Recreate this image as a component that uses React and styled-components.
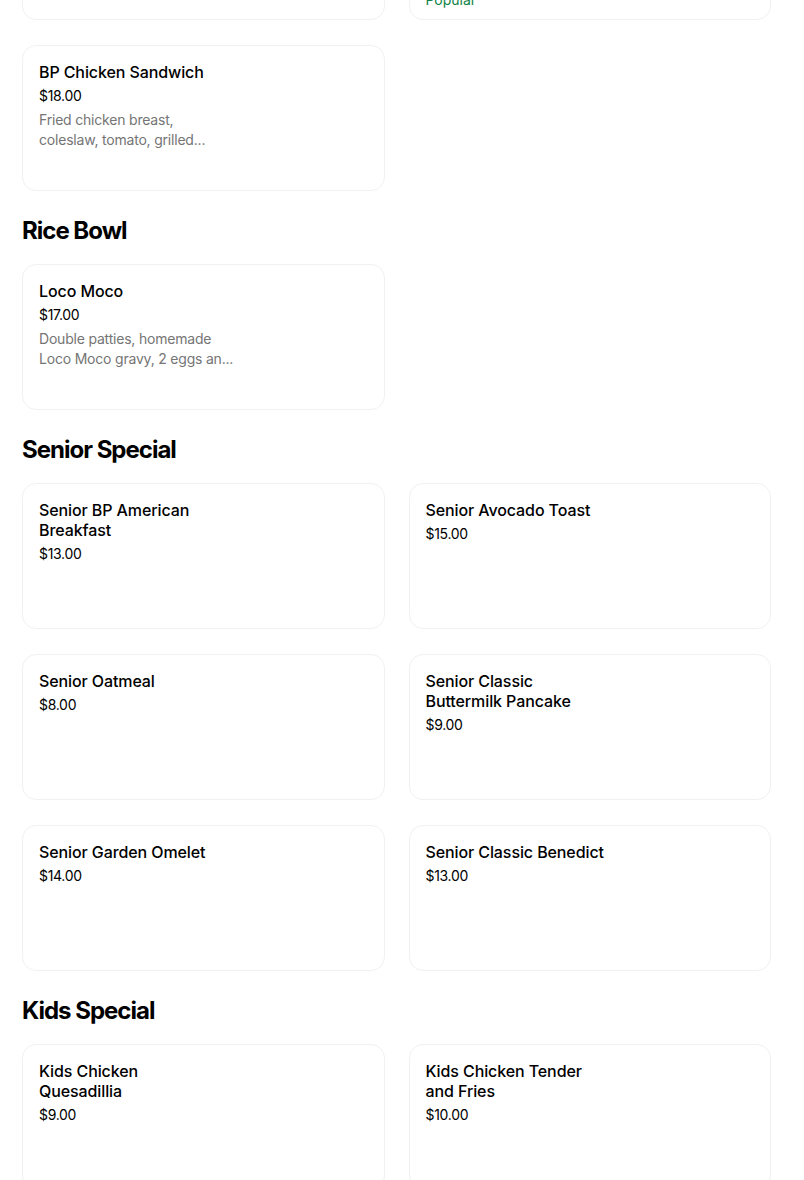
import React from "react";
import styled, { createGlobalStyle } from "styled-components";

const Global = createGlobalStyle`
  html, body { margin: 0; padding: 0; background: #ffffff; }
  body { font-family: Inter, "Noto Sans", "Liberation Sans", sans-serif; color: #000; overflow: hidden; }
`;

const Page = styled.main`
  width: 749px;
  padding: 0 22px;
  margin-top: -126px;
`;

const Section = styled.section`
  display: flex;
  flex-direction: column;
  padding-top: ${(p) => (p.$first ? "0" : "24px")};
`;

const Heading = styled.h2`
  margin: 0 0 17px;
  font-size: 24px;
  line-height: 32px;
  font-weight: 700;
  letter-spacing: -1px;
`;

const Grid = styled.div`
  display: grid;
  grid-template-columns: 1fr 1fr;
  column-gap: 24px;
  row-gap: 25px;
`;

const Card = styled.div`
  box-sizing: border-box;
  min-height: 146px;
  border: 1px solid #f1f1f1;
  border-radius: 14px;
  padding: 16px 16px 9px;
  display: flex;
  flex-direction: column;
`;

const Info = styled.div`
  max-width: 186px;
  display: flex;
  flex-direction: column;
  gap: 4px;
`;

const Title = styled.div`
  font-size: 16px;
  line-height: 20px;
  font-weight: 500;
  letter-spacing: -0.1px;
  color: #000;
`;

const Price = styled.div`
  font-size: 14px;
  line-height: 20px;
  font-weight: 400;
  letter-spacing: -0.3px;
  color: #000;
`;

const Desc = styled.div`
  display: flex;
  flex-direction: column;
  font-size: 14px;
  line-height: 20px;
  color: #757575;
  letter-spacing: -0.2px;
`;

const DescLine = styled.span`
  white-space: nowrap;
`;

const Tag = styled.div`
  margin-top: auto;
  font-size: 14px;
  line-height: 20px;
  font-weight: 400;
  color: #0e8345;
`;

const Item = ({ title, price, desc, tag }) => (
  <Card>
    <Info>
      <Title>{title}</Title>
      <Price>{price}</Price>
      {desc && (
        <Desc>
          {desc.map((line) => (
            <DescLine key={line}>{line}</DescLine>
          ))}
        </Desc>
      )}
    </Info>
    {tag && <Tag>{tag}</Tag>}
  </Card>
);

const sections = [
  {
    first: true,
    items: [
      { title: "BP Burger", price: "$17.00", desc: ["Beef patty, lettuce, tomato,", "onion, cheese and fries"] },
      { title: "BP Fish Sandwich", price: "$18.00", desc: ["Crispy fish fillet, tartar", "sauce, lettuce and fries"], tag: "Popular" },
      { title: "BP Chicken Sandwich", price: "$18.00", desc: ["Fried chicken breast,", "coleslaw, tomato, grilled..."] },
    ],
  },
  {
    name: "Rice Bowl",
    items: [
      { title: "Loco Moco", price: "$17.00", desc: ["Double patties, homemade", "Loco Moco gravy, 2 eggs an..."] },
    ],
  },
  {
    name: "Senior Special",
    items: [
      { title: "Senior BP American Breakfast", price: "$13.00" },
      { title: "Senior Avocado Toast", price: "$15.00" },
      { title: "Senior Oatmeal", price: "$8.00" },
      { title: "Senior Classic Buttermilk Pancake", price: "$9.00" },
      { title: "Senior Garden Omelet", price: "$14.00" },
      { title: "Senior Classic Benedict", price: "$13.00" },
    ],
  },
  {
    name: "Kids Special",
    items: [
      { title: "Kids Chicken Quesadillia", price: "$9.00" },
      { title: "Kids Chicken Tender and Fries", price: "$10.00" },
    ],
  },
];

export default function App() {
  return (
    <>
      <Global />
      <Page>
        {sections.map((s, i) => (
          <Section key={i} $first={s.first}>
            {s.name && <Heading>{s.name}</Heading>}
            <Grid>
              {s.items.map((it) => (
                <Item key={it.title} {...it} />
              ))}
            </Grid>
          </Section>
        ))}
      </Page>
    </>
  );
}
